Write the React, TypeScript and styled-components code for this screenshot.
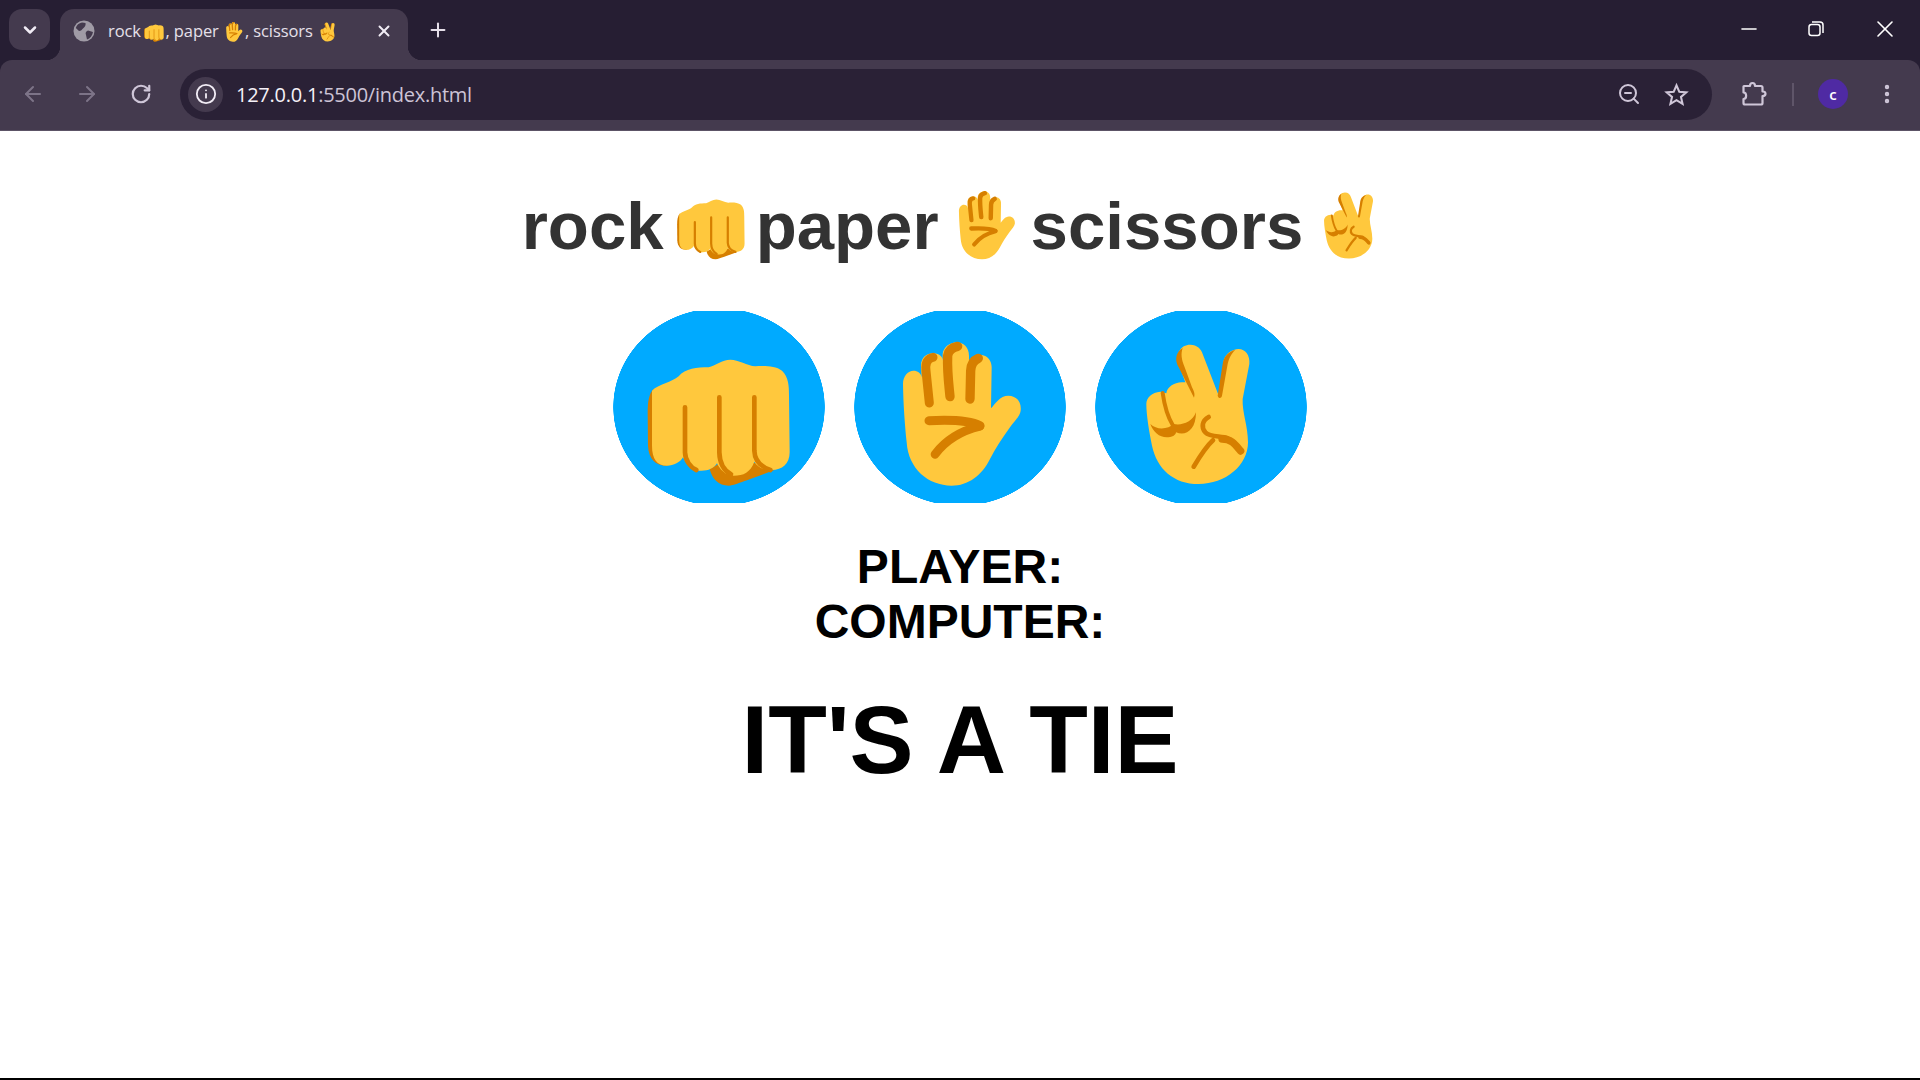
import styled, { createGlobalStyle } from 'styled-components';
import {
  ArrowLeft,
  ArrowRight,
  ChevronDown,
  EllipsisVertical,
  Info,
  Minus,
  Plus,
  RotateCw,
  X,
  ZoomOut,
} from 'lucide-react';

const SKIN = '#ffc83d';
const SHADE = '#d67f00';

const GlobalStyle = createGlobalStyle`
  html, body {
    margin: 0;
    height: 100%;
    background: #fff;
  }
  #root {
    height: 100%;
  }
`;

const Page = styled.div`
  height: 100vh;
  display: flex;
  flex-direction: column;
  overflow: hidden;
  background: #261e33;
  font-family: 'Liberation Sans', Arial, sans-serif;
`;

/* browser chrome */
const TabStrip = styled.div`
  height: 60px;
  flex: none;
  display: flex;
  align-items: flex-end;
  padding-left: 9px;
`;
const TabMenu = styled.div`
  width: 41px;
  height: 41px;
  margin-bottom: 10px;
  display: flex;
  align-items: center;
  justify-content: center;
  border-radius: 13px;
  background: #443a4e;
  color: #f1ecf5;
`;
const Tab = styled.div`
  position: relative;
  width: 348px;
  height: 51px;
  margin-left: 10px;
  padding: 0 15px 8px 13px;
  box-sizing: border-box;
  display: flex;
  align-items: center;
  border-radius: 14px 14px 0 0;
  background: #443a4e;
  color: #e6e0ea;
  font-family: 'Open Sans', 'Noto Sans', sans-serif;
  font-size: 16.5px;
  &::before,
  &::after {
    content: '';
    position: absolute;
    bottom: 0;
    width: 14px;
    height: 14px;
  }
  &::before {
    left: -14px;
    background: radial-gradient(circle at 0 0, transparent 14px, #443a4e 14.5px);
  }
  &::after {
    right: -14px;
    background: radial-gradient(circle at 100% 0, transparent 14px, #443a4e 14.5px);
  }
`;
const TabTitle = styled.div`
  flex: 1;
  margin-left: 13px;
  display: flex;
  align-items: center;
  white-space: pre;
  letter-spacing: -0.1px;
`;
const TabClose = styled.div`
  display: flex;
  color: #f1ecf5;
`;
const NewTab = styled.div`
  margin: 0 0 19px 19px;
  display: flex;
  color: #e6e0ea;
`;
const WindowControls = styled.div`
  margin-left: auto;
  margin-bottom: 17px;
  padding-right: 21px;
  display: flex;
  align-items: center;
  gap: 47px;
  color: #fff;
`;
const Toolbar = styled.div`
  height: 71px;
  flex: none;
  padding: 0 19px 2px 20px;
  box-sizing: border-box;
  display: flex;
  align-items: center;
  border-radius: 12px 12px 0 0;
  border-bottom: 1px solid #5c5366;
  background: #443a4e;
`;
const NavButton = styled.div<{ $off?: boolean }>`
  width: 26px;
  margin-right: 28px;
  display: flex;
  justify-content: center;
  color: ${(props) => (props.$off ? '#7d7488' : '#cfc6d8')};
  &:nth-child(3) {
    margin-right: 26px;
  }
`;
const Omnibox = styled.div`
  flex: 1;
  height: 51px;
  padding: 0 23px 0 8px;
  box-sizing: border-box;
  display: flex;
  align-items: center;
  border-radius: 26px;
  background: #2a2136;
  color: #cfc6d8;
`;
const SiteInfo = styled.div`
  width: 35px;
  height: 35px;
  flex: none;
  display: flex;
  align-items: center;
  justify-content: center;
  border-radius: 50%;
  background: #443a4e;
  color: #f1ecf5;
`;
const Url = styled.div`
  margin-left: 13px;
  flex: 1;
  font-family: 'Open Sans', 'Noto Sans', sans-serif;
  font-size: 20px;
  letter-spacing: -0.25px;
  color: #cdc4d6;
`;
const UrlHost = styled.span`
  color: #f5f1f8;
`;
const BoxAction = styled.div`
  margin-left: 23px;
  display: flex;
  color: #cfc6d8;
`;
const Extensions = styled.div`
  margin-left: 29px;
  display: flex;
  color: #cfc6d8;
`;
const Divider = styled.div`
  width: 2px;
  height: 23px;
  margin-left: 25px;
  background: #5f5569;
`;
const Avatar = styled.div`
  width: 30px;
  height: 30px;
  margin-left: 24px;
  display: flex;
  align-items: center;
  justify-content: center;
  border-radius: 50%;
  background: #4f2aa3;
  color: #fff;
  font-family: 'Open Sans', sans-serif;
  font-size: 15px;
  font-weight: 600;
`;
const Kebab = styled.div`
  margin-left: 27px;
  margin-right: 2px;
  display: flex;
  color: #cfc6d8;
`;

/* the game */
const Main = styled.main`
  flex: 1;
  padding-top: 57px;
  display: flex;
  flex-direction: column;
  align-items: center;
  border-bottom: 2px solid #000;
  background: #fff;
`;
const Title = styled.h1`
  margin: 0;
  padding-right: 10px;
  display: flex;
  align-items: center;
  height: 74px;
  gap: 9px;
  font-size: 67.2px;
  font-weight: 700;
  color: #333;
`;
const TitleEmoji = styled.span<{ $tight?: boolean }>`
  margin-top: -6px;
  margin-right: ${(props) => (props.$tight ? '-2px' : '0')};
`;
const Choices = styled.div`
  margin-top: 49px;
  display: flex;
  gap: 29px;
`;
const Choice = styled.button`
  width: 212px;
  height: 192px;
  padding: 0;
  display: flex;
  align-items: center;
  justify-content: center;
  border: none;
  background: radial-gradient(106px 99px at center, #00aaff 99.5%, transparent 100%);
`;
const Score = styled.div`
  margin-top: 36px;
  font-size: 48px;
  font-weight: 700;
  text-align: center;
  color: #000;
`;
const Result = styled.div`
  margin-top: 36px;
  font-size: 96px;
  font-weight: 700;
  color: #000;
`;
const EmojiSvg = styled.svg<{ $size: number }>`
  width: ${(props) => props.$size}px;
  height: ${(props) => props.$size}px;
  flex: none;
  display: block;
`;

type EmojiKind = 'rock' | 'paper' | 'scissors';

const Emoji = ({ kind, size }: { kind: EmojiKind; size: number }) => {
  if (kind === 'rock') {
    return (
      <EmojiSvg $size={size} viewBox="116 84 480 480">
        <path
          fill={SHADE}
          d="M160 270C145 285 142 310 142 340L143 440C145 480 165 500 200 500L240 480L200 300Z"
        />
        <path
          fill={SHADE}
          d="M328 510C335 540 355 560 385 560C400 560 420 550 440 544L522 513L400 470Z"
        />
        <path
          fill={SKIN}
          d="M155 275C175 255 215 250 235 232C255 208 290 205 325 205C345 200 365 182 390 182C415 182 440 200 465 202C490 200 525 200 545 215C565 235 566 260 566 290L568 460C568 495 545 513 515 513C490 513 472 505 462 488C450 520 430 530 400 530C375 530 358 510 350 493C340 510 320 517 295 515C270 510 255 490 248 475C240 490 220 500 200 500C170 500 155 480 155 440Z"
        />
        <g fill="none" stroke={SHADE} strokeWidth="14" strokeLinecap="round">
          <path d="M254 325V460C255 485 270 505 288 513" />
          <path d="M357 295V460C358 495 372 515 392 526" />
          <path d="M462 295V455C463 485 480 503 510 513" />
        </g>
      </EmojiSvg>
    );
  }
  if (kind === 'paper') {
    return (
      <EmojiSvg $size={size} viewBox="105 84 480 480">
        <path
          fill={SKIN}
          d="M174 255C174 230 190 215 205 215C218 215 228 222 230 235L228 200C228 175 245 163 265 163C285 163 293 175 293 185V165C295 145 315 130 335 130C355 130 372 145 372 170V185C378 175 395 168 410 168C428 170 440 185 440 205L438 328C450 315 465 290 490 290C515 290 530 310 527 335C525 350 510 365 495 385C470 420 450 450 435 480C410 530 370 560 320 560C250 560 190 510 185 430C180 380 175 320 174 255Z"
        />
        <g fill="none" stroke={SHADE} strokeLinecap="round">
          <path strokeWidth="27" d="M253 312L243 215C240 190 250 177 264 175" />
          <path strokeWidth="28" d="M315 293C312 260 306 220 308 170C310 155 320 146 338 142" />
          <path strokeWidth="28" d="M375 300L377 215C378 195 388 183 400 178" />
          <path strokeWidth="27" d="M252 365C310 362 370 362 405 380" />
          <path strokeWidth="26" d="M405 382C350 395 305 420 270 466" />
        </g>
      </EmojiSvg>
    );
  }
  return (
    <EmojiSvg $size={size} viewBox="107 84 480 480">
      <path
        fill={SKIN}
        d="M183 315C183 295 200 280 225 278L243 283C245 265 265 250 290 250H300L280 195C270 165 285 137 315 137C335 137 348 150 352 165L402 295L415 185C420 165 440 150 460 150C480 150 495 170 492 195L472 300C470 340 488 380 488 430C488 500 420 555 340 555C265 555 215 510 200 440C192 400 183 350 183 315Z"
      />
      <path
        fill={SHADE}
        d="M292 147C270 160 268 185 280 205L326 296C330 285 325 275 320 265L298 205C288 180 286 165 292 147Z"
      />
      <path
        fill={SHADE}
        d="M450 152C425 160 415 175 412 195L397 290C400 300 408 298 410 290L427 195C431 175 440 162 450 152Z"
      />
      <path
        fill={SHADE}
        d="M195 375C205 405 235 425 265 410C270 407 272 403 272 400C300 412 332 395 332 340C320 370 290 380 265 375C250 390 215 395 195 375Z"
      />
      <g fill="none" stroke={SHADE} strokeLinecap="round">
        <path strokeWidth="12" d="M232 282C236 310 245 350 262 378" />
        <path strokeWidth="14" d="M370 354C350 365 347 385 360 400C375 415 405 410 428 418" />
        <path strokeWidth="22" d="M410 420C440 420 452 440 466 456" />
        <path strokeWidth="14" d="M383 424C365 440 345 470 325 503" />
      </g>
    </EmojiSvg>
  );
};

const GlobeIcon = () => (
  <svg width="22" height="22" viewBox="0 0 22 22">
    <circle cx="11" cy="11" r="10.5" fill="#a09ba6" />
    <path
      fill="#443a4e"
      d="M9 2.5C6 3 3.500 5 2.800 8L6 11C8 11 9 9.500 10 8.500C12 7 13 5 12.500 3ZM20 12L15 10.500C13 11 12 13 13 15L14 19.500C17 18.500 19.500 15.500 20 12Z"
    />
  </svg>
);

const RestoreIcon = () => (
  <svg width="16" height="16" viewBox="0 0 16 16" fill="none" stroke="currentColor" strokeWidth="1.500">
    <rect x="1" y="3.500" width="11" height="11" rx="2.500" />
    <path d="M4 1H12C14 1 15 2 15 4V12" />
  </svg>
);

const PuzzleIcon = () => (
  <svg width="26" height="26" viewBox="0 0 26 26" fill="none" stroke="currentColor" strokeWidth="2.200" strokeLinejoin="round">
    <path d="M3 5H9C9 1 14 1 14 5H20C21 5 21.500 5.500 21.500 6.500V10.500C25.500 10.500 25.500 15 21.500 15V22C21.500 23 21 23.500 20 23.500H4C3 23.500 2.500 23 2.500 22V18C6 18 6 11.500 2.500 11.500V5.500C2.500 5 2.700 5 3 5Z" />
  </svg>
);

const StarIcon = () => (
  <svg width="25" height="25" viewBox="0 0 24 24" fill="none" stroke="currentColor" strokeWidth="2" strokeLinejoin="miter">
    <path d="M12 3.200L14.700 9.400L21.400 10L16.300 14.400L17.800 21L12 17.500L6.200 21L7.700 14.400L2.600 10L9.300 9.400Z" />
  </svg>
);

export default function App() {
  return (
    <Page>
      <GlobalStyle />
      <TabStrip>
        <TabMenu>
          <ChevronDown size={20} strokeWidth={3} />
        </TabMenu>
        <Tab>
          <GlobeIcon />
          <TabTitle>
            rock&#8201;<Emoji kind="rock" size={22} />, paper <Emoji kind="paper" size={22} />, scissors <Emoji kind="scissors" size={22} />
          </TabTitle>
          <TabClose>
            <X size={18} strokeWidth={2.6} />
          </TabClose>
        </Tab>
        <NewTab>
          <Plus size={22} strokeWidth={2.2} />
        </NewTab>
        <WindowControls>
          <Minus size={24} strokeWidth={1.6} />
          <RestoreIcon />
          <X size={28} strokeWidth={1.4} />
        </WindowControls>
      </TabStrip>
      <Toolbar>
        <NavButton $off>
          <ArrowLeft size={24} strokeWidth={2} />
        </NavButton>
        <NavButton $off>
          <ArrowRight size={24} strokeWidth={2} />
        </NavButton>
        <NavButton>
          <RotateCw size={22} strokeWidth={2.4} />
        </NavButton>
        <Omnibox>
          <SiteInfo>
            <Info size={22} strokeWidth={2} />
          </SiteInfo>
          <Url>
            <UrlHost>127.0.0.1</UrlHost>:5500/index.html
          </Url>
          <BoxAction>
            <ZoomOut size={24} strokeWidth={2} />
          </BoxAction>
          <BoxAction>
            <StarIcon />
          </BoxAction>
        </Omnibox>
        <Extensions>
          <PuzzleIcon />
        </Extensions>
        <Divider />
        <Avatar>c</Avatar>
        <Kebab>
          <EllipsisVertical size={24} strokeWidth={2.4} />
        </Kebab>
      </Toolbar>
      <Main>
        <Title>
          rock
          <TitleEmoji $tight>
            <Emoji kind="rock" size={76} />
          </TitleEmoji>
          paper
          <TitleEmoji $tight>
            <Emoji kind="paper" size={76} />
          </TitleEmoji>
          scissors
          <TitleEmoji>
            <Emoji kind="scissors" size={76} />
          </TitleEmoji>
        </Title>
        <Choices>
          <Choice>
            <Emoji kind="rock" size={160} />
          </Choice>
          <Choice>
            <Emoji kind="paper" size={160} />
          </Choice>
          <Choice>
            <Emoji kind="scissors" size={160} />
          </Choice>
        </Choices>
        <Score>
          PLAYER:
          <br />
          COMPUTER:
        </Score>
        <Result>IT'S A TIE</Result>
      </Main>
    </Page>
  );
}
